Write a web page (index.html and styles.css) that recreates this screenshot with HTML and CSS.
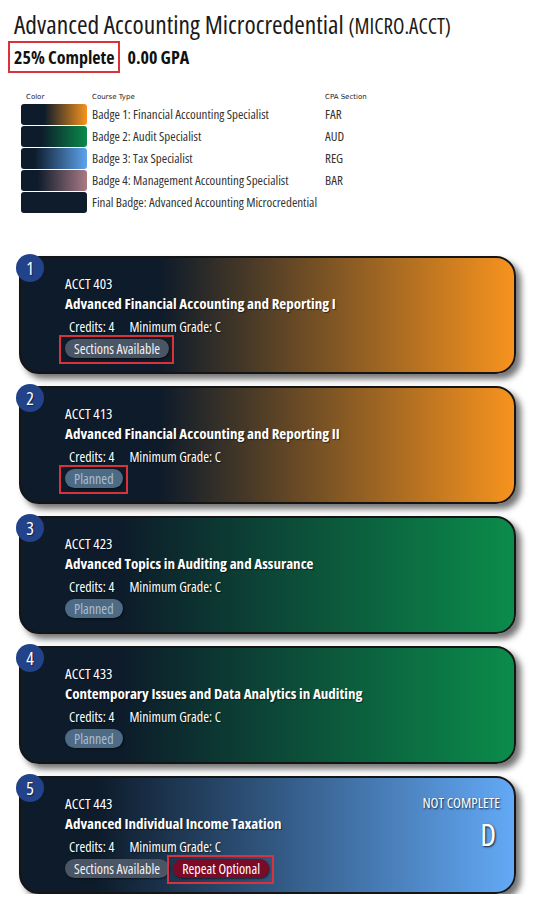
FILE: index.html
```html
<!DOCTYPE html>
<html lang="en">
<head>
<meta charset="utf-8">
<title>Advanced Accounting Microcredential</title>
<link rel="stylesheet" href="styles.css">
</head>
<body>
<h1 class="title">Advanced Accounting Microcredential <span class="code">(MICRO.ACCT)</span></h1>
<div class="progress">
  <span class="complete">25% Complete</span>
  <span class="gpa">0.00 GPA</span>
</div>

<div class="legend">
  <div class="lh lh-color">Color</div>
  <div class="lh">Course Type</div>
  <div class="lh">CPA Section</div>

  <div class="sw sw-orange"></div>
  <div class="lt">Badge 1: Financial Accounting Specialist</div>
  <div class="lc">FAR</div>

  <div class="sw sw-green"></div>
  <div class="lt">Badge 2: Audit Specialist</div>
  <div class="lc">AUD</div>

  <div class="sw sw-blue"></div>
  <div class="lt">Badge 3: Tax Specialist</div>
  <div class="lc">REG</div>

  <div class="sw sw-mauve"></div>
  <div class="lt">Badge 4: Management Accounting Specialist</div>
  <div class="lc">BAR</div>

  <div class="sw sw-dark"></div>
  <div class="lt">Final Badge: Advanced Accounting Microcredential</div>
  <div class="lc"></div>
</div>

<div class="cards">
  <div class="card card-orange">
    <div class="num">1</div>
    <div class="code-line">ACCT 403</div>
    <div class="name">Advanced Financial Accounting and Reporting I</div>
    <div class="meta"><span>Credits: 4</span><span>Minimum Grade: C</span></div>
    <div class="tags"><span class="tag tag-sections mark">Sections Available</span></div>
  </div>

  <div class="card card-orange">
    <div class="num">2</div>
    <div class="code-line">ACCT 413</div>
    <div class="name">Advanced Financial Accounting and Reporting II</div>
    <div class="meta"><span>Credits: 4</span><span>Minimum Grade: C</span></div>
    <div class="tags"><span class="tag tag-planned mark">Planned</span></div>
  </div>

  <div class="card card-green">
    <div class="num">3</div>
    <div class="code-line">ACCT 423</div>
    <div class="name">Advanced Topics in Auditing and Assurance</div>
    <div class="meta"><span>Credits: 4</span><span>Minimum Grade: C</span></div>
    <div class="tags"><span class="tag tag-planned">Planned</span></div>
  </div>

  <div class="card card-green">
    <div class="num">4</div>
    <div class="code-line">ACCT 433</div>
    <div class="name">Contemporary Issues and Data Analytics in Auditing</div>
    <div class="meta"><span>Credits: 4</span><span>Minimum Grade: C</span></div>
    <div class="tags"><span class="tag tag-planned">Planned</span></div>
  </div>

  <div class="card card-blue">
    <div class="num">5</div>
    <div class="status">
      <div class="status-text">NOT COMPLETE</div>
      <div class="grade">D</div>
    </div>
    <div class="code-line">ACCT 443</div>
    <div class="name">Advanced Individual Income Taxation</div>
    <div class="meta"><span>Credits: 4</span><span>Minimum Grade: C</span></div>
    <div class="tags"><span class="tag tag-sections">Sections Available</span><span class="tag tag-repeat mark">Repeat Optional</span></div>
  </div>
</div>
</body>
</html>
```

FILE: styles.css
```css
body {
  margin: 8px;
  font-family: "Open Sans", sans-serif;
  font-stretch: 75%;
  color: #111;
  background: #fff;
}

.title {
  margin: 0;
  padding: 2px 0 0 6px;
  font-size: 25.5px;
  font-weight: normal;
  line-height: 29px;
  color: #1a1a1a;
  white-space: nowrap;
}

.title .code {
  font-size: 21px;
}

.progress {
  display: flex;
  align-items: center;
  gap: 7px;
}

.complete {
  border: 2px solid #d9323b;
  padding: 0 4px;
  height: 28px;
  display: flex;
  align-items: center;
  font-weight: bold;
  font-size: 18px;
}

.gpa {
  font-weight: bold;
  font-size: 18px;
}

.legend {
  display: grid;
  grid-template-columns: 66px 233px 80px;
  grid-template-rows: 12px;
  grid-auto-rows: 22px;
  margin: 19px 0 0 13px;
}

.lh {
  font-family: "DejaVu Sans", sans-serif;
  font-stretch: normal;
  font-size: 7px;
  color: #222;
  padding-left: 5px;
  line-height: 10px;
  white-space: nowrap;
}

.sw {
  height: 21px;
  border-radius: 3px;
}

.sw-orange { background: linear-gradient(90deg, #0d1b2a 35%, #f7931e 100%); }
.sw-green  { background: linear-gradient(90deg, #0d1b2a 30%, #0b8a4a 100%); }
.sw-blue   { background: linear-gradient(90deg, #0d1b2a 20%, #5ea3ee 100%); }
.sw-mauve  { background: linear-gradient(90deg, #0d1b2a 25%, #a97a85 100%); }
.sw-dark   { background: #0e1c2b; }

.lt, .lc {
  font-size: 13px;
  line-height: 21px;
  color: #333;
  padding-left: 5px;
  white-space: nowrap;
}

.cards {
  display: flex;
  flex-direction: column;
  gap: 12px;
  margin: 42px 12px 0 11px;
}

.card {
  position: relative;
  height: 118px;
  box-sizing: border-box;
  border: 2px solid #151515;
  border-radius: 20px;
  padding: 15px 14px 0 44px;
  color: #fff;
  box-shadow: 5px 5px 6px rgba(0, 0, 0, 0.55);
  text-shadow: 1px 1px 1px rgba(0, 0, 0, 0.5);
}

.card-orange { background: linear-gradient(90deg, #0d1b2a 28%, #f7931e 100%); }
.card-green  { background: linear-gradient(90deg, #0d1b2a 20%, #0b8c4b 100%); }
.card-blue   { background: linear-gradient(90deg, #0d1b2a 15%, #63a9f6 100%); }

.num {
  position: absolute;
  left: -5px;
  top: -4px;
  width: 28px;
  height: 28px;
  border-radius: 50%;
  background: #22438a;
  color: #fff;
  font-size: 18px;
  line-height: 28px;
  text-align: center;
}

.code-line {
  font-size: 15px;
  line-height: 20px;
}

.name {
  font-size: 15px;
  font-weight: bold;
  line-height: 20px;
}

.meta {
  display: flex;
  gap: 15px;
  margin-top: 5px;
  padding-left: 4px;
  font-size: 14px;
  line-height: 18px;
}

.tags {
  display: flex;
  gap: 4px;
  margin-top: 3px;
}

.tag {
  position: relative;
  display: inline-block;
  height: 19px;
  line-height: 19px;
  padding: 0 9px;
  border-radius: 10px;
  font-size: 14px;
  text-shadow: none;
  box-shadow: 1px 1px 2px rgba(0, 0, 0, 0.5);
}

.tag-sections { background: #4a5566; color: #f1f1f1; }
.tag-planned  { background: #4e6b86; color: #a9bdcf; }
.tag-repeat   { background: #7b0a26; color: #fff; }

.mark::after {
  content: "";
  position: absolute;
  left: -6px;
  right: -5px;
  top: -4px;
  bottom: -6px;
  border: 2px solid #d9323b;
}

.status {
  position: absolute;
  right: 14px;
  top: 18px;
  text-align: right;
}

.status-text {
  font-size: 14.5px;
  line-height: 14px;
  text-shadow: 1px 1px 2px rgba(0, 0, 0, 0.8);
}

.grade {
  font-size: 31px;
  line-height: 34px;
  margin-top: 7px;
  padding-right: 4px;
  text-shadow: 1px 1px 2px rgba(0, 0, 0, 0.8);
}
```
